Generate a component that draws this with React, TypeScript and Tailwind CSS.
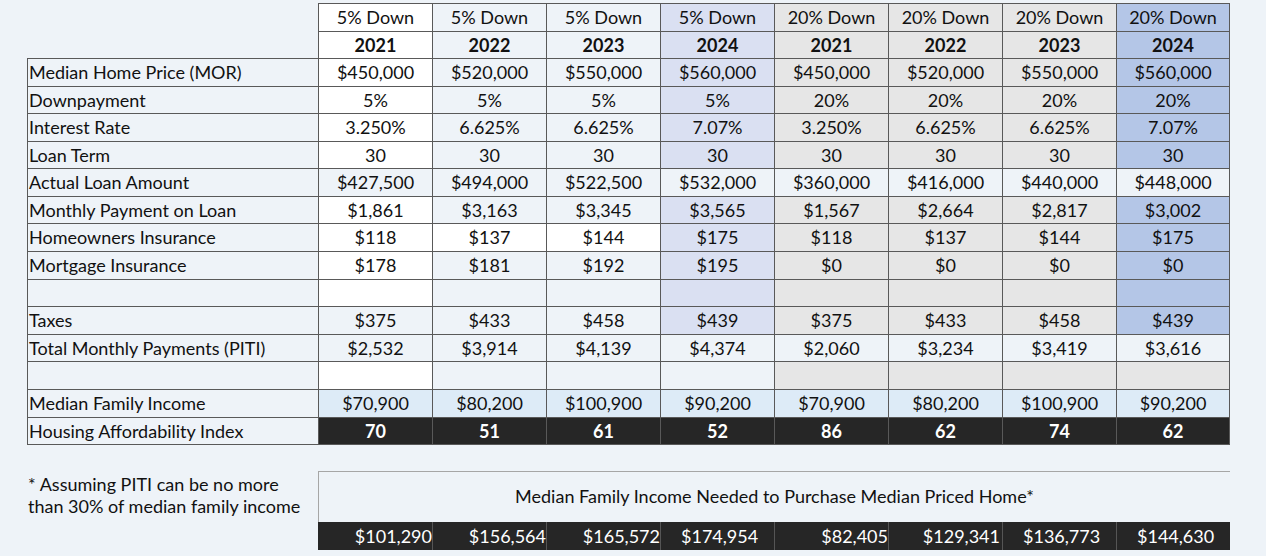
import React from "react";

const W = "bg-white";
const L = "bg-[#eef3f8]";
const V = "bg-[#dae0f2]";
const G = "bg-[#e6e6e6]";
const B = "bg-[#b4c6e7]";
const I = "bg-[#ddebf7]";
const K = "bg-[#262626] text-white font-bold";

const base = [W, L, L, V, G, G, G, B];
const allL = [L, L, L, L, L, L, L, L];

type Row = {
  label: string | null;
  values: string[];
  colors: string[];
  h: string;
  bold?: boolean;
};

const rows: Row[] = [
  { label: null, values: ["5% Down", "5% Down", "5% Down", "5% Down", "20% Down", "20% Down", "20% Down", "20% Down"], colors: base, h: "h-[28px]" },
  { label: null, values: ["2021", "2022", "2023", "2024", "2021", "2022", "2023", "2024"], colors: base, h: "h-[27px]", bold: true },
  { label: "Median Home Price (MOR)", values: ["$450,000", "$520,000", "$550,000", "$560,000", "$450,000", "$520,000", "$550,000", "$560,000"], colors: base, h: "h-[28px]" },
  { label: "Downpayment", values: ["5%", "5%", "5%", "5%", "20%", "20%", "20%", "20%"], colors: base, h: "h-[27px]" },
  { label: "Interest Rate", values: ["3.250%", "6.625%", "6.625%", "7.07%", "3.250%", "6.625%", "6.625%", "7.07%"], colors: base, h: "h-[28px]" },
  { label: "Loan Term", values: ["30", "30", "30", "30", "30", "30", "30", "30"], colors: base, h: "h-[27px]" },
  { label: "Actual Loan Amount", values: ["$427,500", "$494,000", "$522,500", "$532,000", "$360,000", "$416,000", "$440,000", "$448,000"], colors: allL, h: "h-[28px]" },
  { label: "Monthly Payment on Loan", values: ["$1,861", "$3,163", "$3,345", "$3,565", "$1,567", "$2,664", "$2,817", "$3,002"], colors: base, h: "h-[27px]" },
  { label: "Homeowners Insurance", values: ["$118", "$137", "$144", "$175", "$118", "$137", "$144", "$175"], colors: [W, W, W, V, G, G, G, B], h: "h-[28px]" },
  { label: "Mortgage Insurance", values: ["$178", "$181", "$192", "$195", "$0", "$0", "$0", "$0"], colors: base, h: "h-[28px]" },
  { label: "", values: ["", "", "", "", "", "", "", ""], colors: base, h: "h-[27px]" },
  { label: "Taxes", values: ["$375", "$433", "$458", "$439", "$375", "$433", "$458", "$439"], colors: [L, L, L, V, G, G, G, B], h: "h-[28px]" },
  { label: "Total Monthly Payments (PITI)", values: ["$2,532", "$3,914", "$4,139", "$4,374", "$2,060", "$3,234", "$3,419", "$3,616"], colors: allL, h: "h-[27px]" },
  { label: "", values: ["", "", "", "", "", "", "", ""], colors: [W, L, L, L, G, G, G, G], h: "h-[28px]" },
  { label: "Median Family Income", values: ["$70,900", "$80,200", "$100,900", "$90,200", "$70,900", "$80,200", "$100,900", "$90,200"], colors: [I, I, I, I, I, I, I, I], h: "h-[28px]" },
  { label: "Housing Affordability Index", values: ["70", "51", "61", "52", "86", "62", "74", "62"], colors: [K, K, K, K, K, K, K, K], h: "h-[28px]" },
];

const barVals = ["$101,290", "$156,564", "$165,572", "$174,954", "$82,405", "$129,341", "$136,773", "$144,630"];
const barAlign = [
  "justify-end pr-0",
  "justify-end pr-0",
  "justify-end pr-0",
  "justify-start pl-[20px]",
  "justify-end pr-0",
  "justify-end pr-[2px]",
  "justify-start pl-[20px]",
  "justify-start pl-[20px]",
];

export default function App() {
  return (
    <div
      className="w-[1266px] h-[556px] overflow-hidden bg-[#eef3f8] text-[#111] text-[18px] leading-none"
      style={{ fontFamily: "Lato, 'Open Sans', sans-serif" }}
    >
      <div className="ml-[27px] mt-[3px] flex flex-col w-[1203px]">
        {rows.map((r, ri) => {
          const last = ri === rows.length - 1;
          return (
            <div key={ri} className={`flex ${r.h}`}>
              {r.label === null ? (
                <div className="w-[291px] shrink-0" />
              ) : (
                <div
                  className={`w-[291px] shrink-0 border-l border-t border-[#595959] flex items-center pl-[1px] pb-[1px] ${last ? "border-b" : ""}`}
                >
                  {r.label}
                </div>
              )}
              {r.values.map((v, ci) => (
                <div
                  key={ci}
                  className={`w-[114px] shrink-0 border-l border-t border-[#595959] flex items-center justify-center pb-[1px] ${r.colors[ci]} ${ci === 7 ? "border-r" : ""} ${last ? "border-b" : ""} ${r.bold ? "font-bold" : ""}`}
                >
                  {v}
                </div>
              ))}
            </div>
          );
        })}
      </div>

      <div className="ml-[27px] mt-[26px] flex">
        <div className="w-[291px] shrink-0 pt-[2px] pl-[1px] leading-[22px]">
          <div>* Assuming PITI can be no more</div>
          <div>than 30% of median family income</div>
        </div>
        <div className="w-[912px] shrink-0 flex flex-col">
          <div className="h-[51px] border-t border-l border-[#a6a6a6] flex items-center justify-center pb-[2px]">
            Median Family Income Needed to Purchase Median Priced Home*
          </div>
          <div className="h-[28px] flex bg-[#262626] text-white">
            {barVals.map((v, i) => (
              <div
                key={i}
                className={`w-[114px] shrink-0 flex items-center pb-[1px] ${barAlign[i]} ${i > 0 ? "border-l border-[#555]" : ""}`}
              >
                {v}
              </div>
            ))}
          </div>
        </div>
      </div>
    </div>
  );
}
